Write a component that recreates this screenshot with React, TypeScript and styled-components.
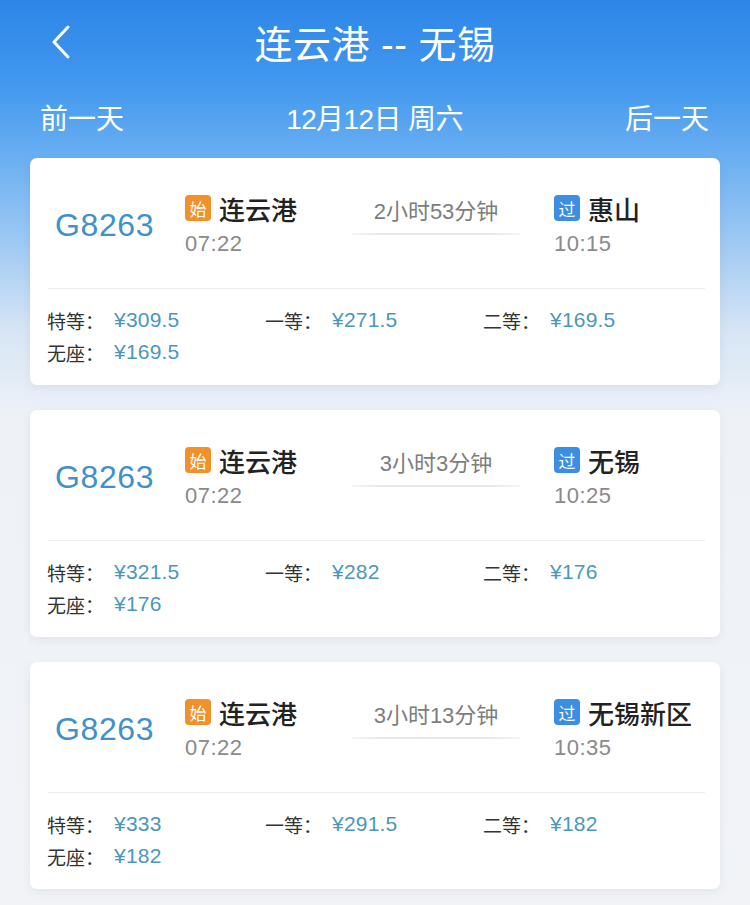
import React from 'react';
import styled, { createGlobalStyle } from 'styled-components';

const GlobalStyle = createGlobalStyle`
	* { box-sizing: border-box; }
	body {
		margin: 0;
		font-family: 'Liberation Sans', 'Noto Sans CJK SC', sans-serif;
		background: #f1f3f7;
	}
`;

const Page = styled.div`
	min-height: 905px;
	background: linear-gradient(
		180deg,
		#2d85e8 0px,
		#449aee 90px,
		#6cb0f2 160px,
		#9dc8f3 240px,
		#d6e5f5 330px,
		#eef2f7 420px,
		#f1f3f7 100%
	);
	padding-bottom: 20px;
`;

const NavBar = styled.div`
	height: 84px;
	display: flex;
	align-items: center;
	justify-content: center;
	position: relative;
	color: #fff;
`;

const BackButton = styled.button`
	position: absolute;
	left: 46px;
	top: 24px;
	width: 30px;
	height: 36px;
	padding: 0;
	border: none;
	background: none;
	display: flex;
	align-items: center;
	justify-content: center;
`;

const Title = styled.h1`
	margin: 0;
	font-size: 38px;
	font-weight: 400;
	letter-spacing: 0.5px;
	padding-bottom: 2px;
`;

const DateBar = styled.div`
	height: 70px;
	display: flex;
	align-items: center;
	justify-content: space-between;
	padding: 0 41px 4px 40px;
	color: #fff;
	font-size: 28px;
`;

const DayLink = styled.span<{ $right?: boolean }>`
	width: 90px;
	text-align: ${(p) => (p.$right ? 'right' : 'left')};
`;

const DateText = styled.span`
	font-size: 28px;
	letter-spacing: -0.6px;
`;

const List = styled.div`
	display: flex;
	flex-direction: column;
	gap: 25px;
	padding: 4px 30px 0;
`;

const Card = styled.div`
	background: #fff;
	border-radius: 7px;
	box-shadow: 0 3px 10px rgba(60, 80, 110, 0.08);
	height: 227px;
`;

const Top = styled.div`
	height: 131px;
	display: grid;
	grid-template-columns: 130px 167px 168px 1fr;
	padding: 36px 0 0 7px;
	margin: 0 15px 0 18px;
	border-bottom: 1px solid #ececec;
`;

const TrainNo = styled.div`
	font-size: 32px;
	color: #4290c8;
	height: 62px;
	display: flex;
	align-items: center;
	letter-spacing: 0.6px;
`;

const Stop = styled.div`
	display: flex;
	flex-direction: column;
`;

const StationRow = styled.div`
	display: flex;
	align-items: center;
	height: 28px;
	gap: 8px;
`;

const Badge = styled.span<{ $kind: 'start' | 'pass' }>`
	width: 26px;
	height: 26px;
	border-radius: 4px;
	background: ${(p) => (p.$kind === 'start' ? '#f0912c' : '#3b8ee2')};
	color: #fff;
	font-size: 17px;
	display: flex;
	align-items: center;
	justify-content: center;
`;

const Station = styled.span`
	font-size: 26px;
	font-weight: 500;
	color: #222;
`;

const Time = styled.div`
	margin-top: 10px;
	font-size: 22px;
	line-height: 24px;
	color: #8a8a8a;
	letter-spacing: 0.5px;
`;

const Duration = styled.div`
	padding-top: 6px;
	display: flex;
	flex-direction: column;
	align-items: center;
`;

const DurationText = styled.span`
	font-size: 22px;
	line-height: 24px;
	color: #7d7d7d;
`;

const DurationLine = styled.div`
	margin-top: 9px;
	width: 100%;
	height: 2px;
	background: linear-gradient(90deg, #f4f4f4, #e6e6e6 20%, #e6e6e6 80%, #f4f4f4);
`;

const Arrival = styled(Stop)`
	padding-left: 34px;
`;

const Prices = styled.div`
	display: grid;
	grid-template-columns: repeat(3, 218px);
	padding: 15px 17px 0;
`;

const Price = styled.div`
	display: flex;
	align-items: center;
	height: 32px;
`;

const SeatLabel = styled.span`
	width: 67px;
	font-size: 19px;
	color: #333;
`;

const Amount = styled.span`
	font-size: 21px;
	color: #4b97bb;
	letter-spacing: 0.2px;
`;

type Train = {
	no: string;
	from: string;
	dep: string;
	to: string;
	arr: string;
	duration: string;
	prices: [string, string][];
};

const trains: Train[] = [
	{
		no: 'G8263',
		from: '连云港',
		dep: '07:22',
		to: '惠山',
		arr: '10:15',
		duration: '2小时53分钟',
		prices: [
			['特等：', '¥309.5'],
			['一等：', '¥271.5'],
			['二等：', '¥169.5'],
			['无座：', '¥169.5'],
		],
	},
	{
		no: 'G8263',
		from: '连云港',
		dep: '07:22',
		to: '无锡',
		arr: '10:25',
		duration: '3小时3分钟',
		prices: [
			['特等：', '¥321.5'],
			['一等：', '¥282'],
			['二等：', '¥176'],
			['无座：', '¥176'],
		],
	},
	{
		no: 'G8263',
		from: '连云港',
		dep: '07:22',
		to: '无锡新区',
		arr: '10:35',
		duration: '3小时13分钟',
		prices: [
			['特等：', '¥333'],
			['一等：', '¥291.5'],
			['二等：', '¥182'],
			['无座：', '¥182'],
		],
	},
];

const TrainCard = ({ train }: { train: Train }) => (
	<Card>
		<Top>
			<TrainNo>{train.no}</TrainNo>
			<Stop>
				<StationRow>
					<Badge $kind="start">始</Badge>
					<Station>{train.from}</Station>
				</StationRow>
				<Time>{train.dep}</Time>
			</Stop>
			<Duration>
				<DurationText>{train.duration}</DurationText>
				<DurationLine />
			</Duration>
			<Arrival>
				<StationRow>
					<Badge $kind="pass">过</Badge>
					<Station>{train.to}</Station>
				</StationRow>
				<Time>{train.arr}</Time>
			</Arrival>
		</Top>
		<Prices>
			{train.prices.map(([label, value]) => (
				<Price key={label}>
					<SeatLabel>{label}</SeatLabel>
					<Amount>{value}</Amount>
				</Price>
			))}
		</Prices>
	</Card>
);

export default function App() {
	return (
		<Page>
			<GlobalStyle />
			<NavBar>
				<BackButton aria-label="返回">
					<svg width="24" height="36" viewBox="0 0 24 36" fill="none">
						<path d="M19 3 L5 18 L19 33" stroke="#fff" strokeWidth="3" strokeLinecap="round" strokeLinejoin="round" />
					</svg>
				</BackButton>
				<Title>连云港 -- 无锡</Title>
			</NavBar>
			<DateBar>
				<DayLink>前一天</DayLink>
				<DateText>12月12日 周六</DateText>
				<DayLink $right>后一天</DayLink>
			</DateBar>
			<List>
				{trains.map((t, i) => (
					<TrainCard key={i} train={t} />
				))}
			</List>
		</Page>
	);
}
